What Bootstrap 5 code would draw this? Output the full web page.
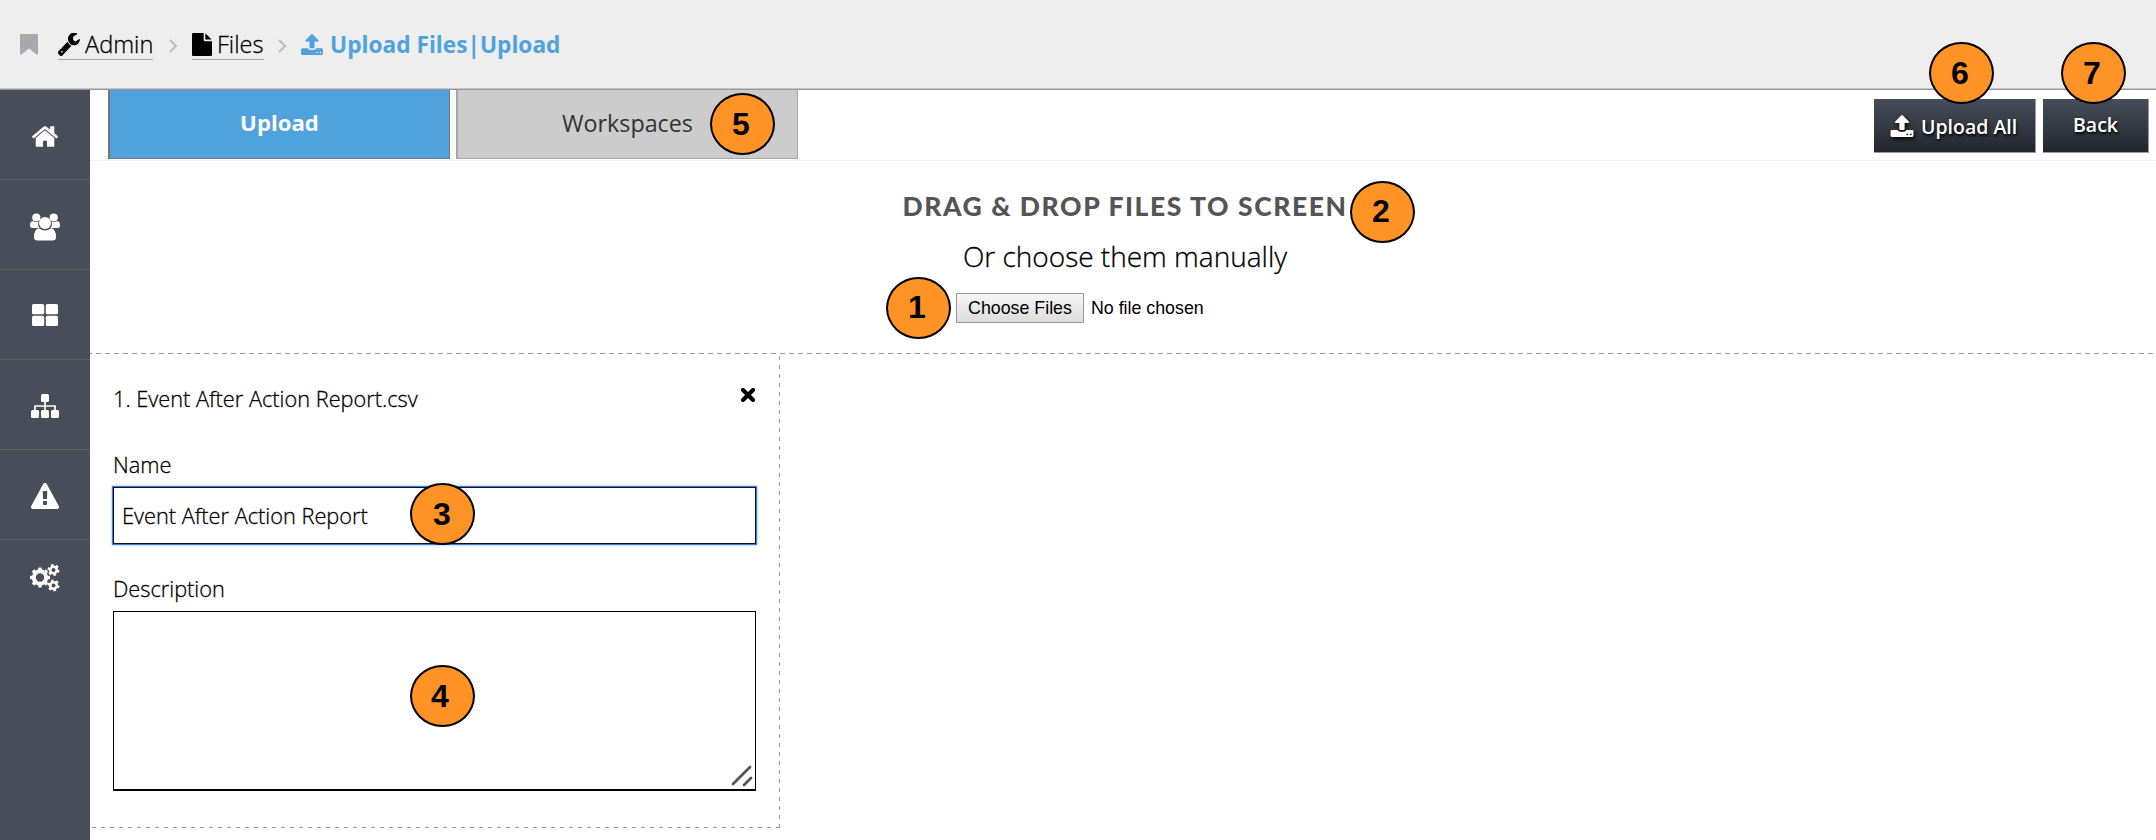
<!DOCTYPE html>
<html lang="en">
<head>
<meta charset="utf-8">
<meta name="viewport" content="width=device-width, initial-scale=1">
<title>Upload Files</title>
<link href="https://cdn.jsdelivr.net/npm/bootstrap@5.3.0/dist/css/bootstrap.min.css" rel="stylesheet">
<style>
body{font-family:"Open Sans","Noto Sans",sans-serif;font-weight:300;color:#000;background:#fff;width:2156px;height:840px;overflow:hidden;line-height:1.4}
svg{display:block;fill:currentColor;flex:none}
.topbar{height:90px;background:#eee;border-bottom:1px solid #999;box-shadow:inset 0 -1px #c4c4c4;padding:0 0 0 20px;font-size:23.6px}
.crumb{color:#000;border-bottom:1px solid #a3a3a6;height:30px;margin-top:1px;line-height:29px}
.crumb svg{margin-top:-3px}
.crumb span,.drop p,.filecard{-webkit-text-stroke:.3px #000}
.crumb-now{color:#4fa2de;font-weight:700;font-size:22.7px}
.chev{color:#bbb;fill:none;stroke:currentColor;stroke-width:2}
.side{width:90px;height:750px;background:#474e5a;color:#fff}
.side a{height:90px;color:#fff;border-bottom:1px solid #5a605f}
.side a:last-child{border:0;height:75px}
.tabs-bar{height:71px;border-bottom:1px solid #f3f3f3;padding-left:18px;gap:6px}
.tab{width:342px;height:69px;font-size:23.3px;font-weight:400;color:#333;background:#ccc;border:1px solid #a6a6a6;border-top:0;border-left-width:2px;line-height:66px;text-align:center}
.tab.on{background:#4fa2de;color:#fff;font-weight:700;font-size:22.2px;border-color:#777}
.act{height:54px;margin-top:9px;color:#fff;font-weight:600;font-size:19.5px;background:linear-gradient(#474e5a,#22272e);border:0 solid #9a9aa2;border-width:0 1px 1px 0;border-radius:0;text-shadow:1px 2px 3px #000}
.act svg{filter:drop-shadow(1px 2px 2px #000)}
.drop{height:193px;padding-top:25px;padding-left:4px;background:repeating-linear-gradient(90deg,#999 0 5px,transparent 5px 9px) -3px 100%/2075px 1px no-repeat}
.drop h2{font:900 26.5px/40px Lato,sans-serif;letter-spacing:1.57px;color:#555;margin:0 0 10px}
.drop p{font-size:28px;line-height:40px;margin:0 0 17px}
.pick{font-family:"Liberation Sans",Arial,sans-serif;font-weight:400;font-size:17.8px;width:338px;height:30px}
.pick button{font:inherit;color:#000;width:128px;height:30px;padding:0;border:1px solid #999;border-radius:1px;background:linear-gradient(#f6f6f6,#dcdcdc);line-height:26px}
.filecard{width:690px;height:474px;padding:0 23px;font-size:21.75px;
 background:repeating-linear-gradient(180deg,#999 0 4px,transparent 4px 9px) 689px 2px/1px 472px no-repeat,
 repeating-linear-gradient(90deg,#999 0 4px,transparent 4px 9px) 2px 473px/688px 1px no-repeat}
.filename{height:90px;padding-top:29px;line-height:32px}
.filecard label{display:block;line-height:32px}
.inp{display:block;width:643px;height:57px;border:1px solid #111;border-radius:0;box-shadow:0 0 0 1px #3b7de8,0 0 2px 1px #6fa8f8;padding:0 0 0 8px;font:inherit;color:#000;outline:0;background:#fff;-webkit-text-stroke:.3px #000}
.area{width:643px;height:180px;border:1px solid #000;border-bottom-width:2px;background:#fff}
.callout{position:absolute;width:65px;height:62px;border:2px solid #000;border-radius:50%;background:#ff9326;font:700 32px/58px "Liberation Sans",Arial,sans-serif;text-align:center;text-indent:-3px}
</style>
</head>
<body class="position-relative">
<svg width="0" height="0" class="position-absolute"><defs>
<symbol id="i-up" viewBox="64 64 1664 1600"><path d="M1344 1472q0-26-19-45t-45-19-45 19-19 45 19 45 45 19 45-19 19-45zm256 0q0-26-19-45t-45-19-45 19-19 45 19 45 45 19 45-19 19-45zm128-224v320q0 40-28 68t-68 28h-1472q-40 0-68-28t-28-68v-320q0-40 28-68t68-28h427q21 56 70.5 92t110.5 36h256q61 0 110.500-36t70.500-92h427q40 0 68 28t28 68zm-325-648q-17 40-59 40h-256v448q0 26-19 45t-45 19h-256q-26 0-45-19t-19-45v-448h-256q-42 0-59-40-17-39 14-69l448-448q18-19 45-19t45 19l448 448q31 30 14 69z"/></symbol>
</defs></svg>

<nav class="topbar d-flex align-items-center" aria-label="breadcrumb">
  <svg width="18" height="21" viewBox="0 0 18 21" style="color:#a9a9ad"><path d="M1 0h16q1 0 1 1v18.500q0 1.500-1.500 1L9 14.500 1.500 20.500q-1.500.5-1.500-1V1Q0 0 1 0z"/></svg>
  <a class="crumb d-flex align-items-center text-decoration-none" href="#" style="margin-left:20px;width:95px"><svg width="22" height="23" viewBox="85 150 1645 1625" preserveAspectRatio="none" style="margin-top:-1px"><path d="M448 1472q0-26-19-45t-45-19-45 19-19 45 19 45 45 19 45-19 19-45zm644-420l-682 682q-37 37-90 37-52 0-91-37l-106-108q-38-36-38-90 0-53 38-91l681-681q39 98 114.500 173.500t173.500 114.500zm634-435q0 39-23 106-47 134-164.500 217.500t-258.500 83.500q-185 0-316.500-131.500t-131.500-316.500 131.500-316.500 316.500-131.500q58 0 121.500 16.500t107.500 46.500q16 11 16 28t-16 28l-293 169v224l193 107q5-3 79-48.500t135.500-81 70.500-35.500q15 0 23.500 10t8.500 25z"/></svg><span style="margin-left:5px">Admin</span></a>
  <svg class="chev" width="9" height="14" viewBox="0 0 9 14" style="margin-left:16px;margin-top:3px"><path d="M1 1l6 6-6 6"/></svg>
  <a class="crumb d-flex align-items-center text-decoration-none" href="#" style="margin-left:14px;width:72px"><svg width="20" height="23" viewBox="128 0 1536 1792" preserveAspectRatio="none" style="margin-top:-1px"><path d="M1152 512v-472q22 14 36 28l408 408q14 14 28 36h-472zm-128 32q0 40 28 68t68 28h544v1056q0 40-28 68t-68 28h-1344q-40 0-68-28t-28-68v-1600q0-40 28-68t68-28h800v544z"/></svg><span style="margin-left:5px">Files</span></a>
  <svg class="chev" width="9" height="14" viewBox="0 0 9 14" style="margin-left:14px;margin-top:3px"><path d="M1 1l6 6-6 6"/></svg>
  <span class="crumb-now d-flex align-items-center" style="margin-left:14px"><svg width="22" height="21"><use href="#i-up"/></svg><span style="margin-left:7px">Upload Files|Upload</span></span>
</nav>

<div class="d-flex">
  <nav class="side d-flex flex-column flex-shrink-0">
    <a href="#" class="d-flex align-items-center justify-content-center" aria-label="Home"><svg width="26" height="21" viewBox="89 250 1614 1290" style="margin-top:3px"><path d="M1472 992v480q0 26-19 45t-45 19h-384v-384h-256v384h-384q-26 0-45-19t-19-45v-480q0-1 .5-3t.5-3l575-474 575 474q1 2 1 6zm223-69l-62 74q-8 9-21 11h-3q-13 0-21-7l-692-577-692 577q-12 8-24 7-13-2-21-11l-62-74q-8-10-7-23.500t11-21.500l719-599q32-26 76-26t76 26l244 204v-195q0-14 9-23t23-9h192q14 0 23 9t9 23v408l219 182q10 8 11 21.500t-7 23.500z"/></svg></a>
    <a href="#" class="d-flex align-items-center justify-content-center" aria-label="Groups"><svg width="30" height="28" viewBox="0 0 30 28" style="margin-top:4px"><circle cx="6.300" cy="4.500" r="4.100"/><circle cx="23.700" cy="4.500" r="4.100"/><path d="M2.500 8q3.500 2 6 .8-1.200 3.500 1 6.200H3q-3 0-3-2.800Q0 8.500 2.500 8zM27.500 8q-3.500 2-6 .8 1.200 3.500-1 6.200H27q3 0 3-2.800Q30 8.500 27.500 8z"/><circle cx="15" cy="10" r="6"/><path d="M9 15.300q6 4.400 12 0 5 .8 5 9 0 3.200-3.600 3.200H7.600Q4 27.500 4 24.300q0-8.200 5-9z"/></svg></a>
    <a href="#" class="d-flex align-items-center justify-content-center" aria-label="Workspaces"><svg width="26" height="22" viewBox="0 0 26 22"><rect width="12.200" height="10.200" rx="1.500"/><rect x="13.800" width="12.200" height="10.200" rx="1.500"/><rect y="11.800" width="12.200" height="10.200" rx="1.500"/><rect x="13.800" y="11.800" width="12.200" height="10.200" rx="1.500"/></svg></a>
    <a href="#" class="d-flex align-items-center justify-content-center" aria-label="Hierarchy"><svg width="28" height="24" viewBox="0 0 28 24" style="margin-top:2px"><rect x="10" width="8" height="8" rx="1.500"/><rect y="16" width="8" height="8" rx="1.500"/><rect x="10" y="16" width="8" height="8" rx="1.500"/><rect x="20" y="16" width="8" height="8" rx="1.500"/><path d="M14 7v10M4 17v-5h20v5" fill="none" stroke="#fff" stroke-width="1.700"/></svg></a>
    <a href="#" class="d-flex align-items-center justify-content-center" aria-label="Alerts"><svg width="28" height="26" viewBox="0 0 1792 1664" style="margin-top:2px"><path d="M1024 1375v-190q0-14-9.500-23.500t-22.500-9.500h-192q-13 0-22.500 9.500t-9.500 23.500v190q0 14 9.500 23.500t22.500 9.500h192q13 0 22.500-9.500t9.500-23.500zm-2-374l18-459q0-12-10-19-13-11-24-11h-220q-11 0-24 11-10 7-10 21l17 457q0 10 10 16.500t24 6.500h185q14 0 23.500-6.500t10.500-16.500zm-14-934l768 1408q35 63-2 126-17 29-46.500 46t-63.500 17h-1536q-34 0-63.500-17t-46.500-46q-37-63-2-126l768-1408q17-31 47-49t65-18 65 18 47 49z"/></svg></a>
    <a href="#" class="d-flex align-items-center justify-content-center" aria-label="Settings"><svg width="30" height="28" viewBox="0 0 30 28" fill="none" stroke="#fff"><g fill="none"><circle cx="10" cy="13.500" r="6.200" stroke-width="4"/><circle cx="10" cy="13.500" r="8.600" stroke-width="2.800" pathLength="16" stroke-dasharray="1 1" stroke-dashoffset=".5"/><circle cx="23.500" cy="6" r="3.300" stroke-width="2.500"/><circle cx="23.500" cy="6" r="4.900" stroke-width="2.200" pathLength="12" stroke-dasharray="1 1"/><circle cx="23.500" cy="21.500" r="3.300" stroke-width="2.500"/><circle cx="23.500" cy="21.500" r="4.900" stroke-width="2.200" pathLength="12" stroke-dasharray="1 1"/></g></svg></a>
  </nav>

  <main class="flex-grow-1">
    <div class="tabs-bar d-flex">
      <div class="tab on">Upload</div>
      <div class="tab">Workspaces</div>
      <div class="d-flex ms-auto" style="gap:7px;margin-right:7px">
        <button class="act d-flex align-items-center p-0" style="width:162px"><svg width="24" height="22" style="margin-left:16px"><use href="#i-up"/></svg><span style="margin-left:7px;padding-top:2px">Upload All</span></button>
        <button class="act p-0" style="width:106px;padding-bottom:2px!important">Back</button>
      </div>
    </div>

    <section class="drop d-flex flex-column align-items-center">
      <h2>DRAG &amp; DROP FILES TO SCREEN</h2>
      <p>Or choose them manually</p>
      <div class="pick d-flex align-items-center"><button type="button">Choose Files</button><span style="margin-left:7px">No file chosen</span></div>
    </section>

    <section class="filecard">
      <div class="filename d-flex justify-content-between"><span>1. Event After Action Report.csv</span>
        <svg width="14" height="14" viewBox="0 0 14 14" style="margin:5px 2px 0 0"><path d="M2 2l10 10M12 2L2 12" stroke="#000" stroke-width="4.200" stroke-linecap="round"/></svg></div>
      <label for="nm" style="padding-top:5px;height:43px">Name</label>
      <input id="nm" class="inp" value="Event After Action Report">
      <label style="height:67px;padding-top:29px">Description</label>
      <div class="area d-flex justify-content-end align-items-end"><svg width="24" height="24" viewBox="0 0 24 24"><path d="M2 19L19 2M13 20l7-7" stroke="#555" stroke-width="2.800" stroke-linecap="round"/></svg></div>
    </section>
  </main>
</div>

<div class="callout" style="left:886px;top:277px;line-height:56px">1</div>
<div class="callout" style="left:1350px;top:181px;line-height:56px">2</div>
<div class="callout" style="left:410px;top:483px;text-indent:-1px">3</div>
<div class="callout" style="left:410px;top:665px;text-indent:-5px">4</div>
<div class="callout" style="left:710px;top:93px">5</div>
<div class="callout" style="left:1929px;top:42px">6</div>
<div class="callout" style="left:2061px;top:42px">7</div>
<script src="https://cdn.jsdelivr.net/npm/bootstrap@5.3.0/dist/js/bootstrap.bundle.min.js"></script>
</body>
</html>
